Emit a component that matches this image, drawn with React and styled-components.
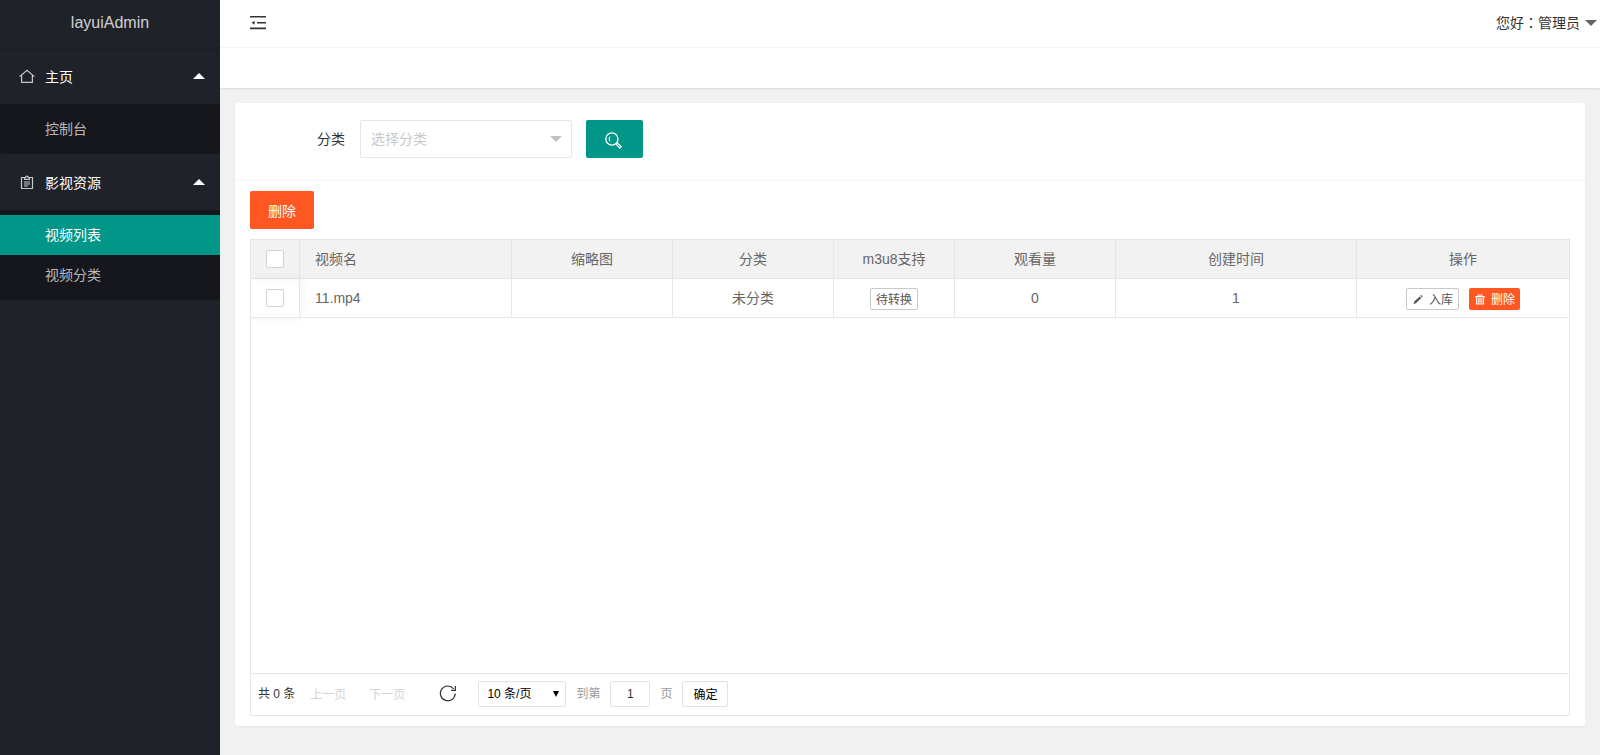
import * as React from 'react';
import styled, { createGlobalStyle, css } from 'styled-components';

const menus = [
  {
    title: '主页',
    icon: 'home',
    items: [{ title: '控制台' }]
  },
  {
    title: '影视资源',
    icon: 'list',
    items: [{ title: '视频列表', active: true }, { title: '视频分类' }]
  }
];

const columns = [
  { key: 'name', title: '视频名', align: 'left' },
  { key: 'thumb', title: '缩略图', width: 161 },
  { key: 'category', title: '分类', width: 161 },
  { key: 'm3u8', title: 'm3u8支持', width: 121 },
  { key: 'views', title: '观看量', width: 161 },
  { key: 'created', title: '创建时间', width: 241 }
];

const videos = [
  { id: 1, name: '11.mp4', thumb: '', category: '未分类', m3u8: '待转换', views: 0, created: 1 }
];

const GlobalStyle = createGlobalStyle`
  * {
    box-sizing: border-box;
  }

  body {
    margin: 0;
    background: #f1f1f1;
    color: #333;
    font: 14px/24px 'Liberation Sans', 'Noto Sans CJK SC', sans-serif;
  }

  button,
  input,
  select {
    margin: 0;
    font-family: inherit;
  }

  svg {
    display: block;
    flex: none;
  }
`;

const HomeIcon = () => (
  <svg width="16" height="16" viewBox="0 0 16 16" fill="none" stroke="currentColor" strokeWidth="1.2">
    <path d="M.6 8.6 8 2.4l7.4 6.2" />
    <path d="M2.6 7.2v7.2h10.8V7.2" />
  </svg>
);

const ListIcon = () => (
  <svg width="16" height="16" viewBox="0 0 16 16" fill="none" stroke="currentColor" strokeWidth="1.2">
    <path d="M5 3.5H2.5v11h11v-11H11" />
    <path d="M5.5 5.4V3.5h1.2a1.3 1.3 0 0 1 2.6 0h1.2v1.9z" />
    <path d="M5 8h6M5 10h6M5 12h4" />
  </svg>
);

const ShrinkIcon = () => (
  <svg width="16" height="16" viewBox="0 0 16 16" fill="currentColor">
    <path d="M0 1h16v1.6H0zM7 7h9v1.6H7zM0 12.6h16v1.6H0zM1.6 7.8 4.6 5.8v4z" />
  </svg>
);

const SearchIcon = () => (
  <svg width="17" height="17" viewBox="0 0 17 17" fill="none" stroke="currentColor">
    <circle cx="6.9" cy="7" r="6.1" strokeWidth="1.3" />
    <path d="M5 4.6a3.6 3.6 0 0 0 0 4.8" />
    <path d="m11.2 12.2 1.2-1.2 3.8 3.6-1.4 1.5z" strokeWidth="1.2" />
  </svg>
);

const RefreshIcon = () => (
  <svg width="18" height="18" viewBox="0 0 18 18" fill="none" stroke="currentColor" strokeWidth="1.2">
    <path d="M16.2 8.6A7.4 7.4 0 1 1 14.6 3.8" />
    <path d="M16.4 1v4.4h-4.2" />
  </svg>
);

const PencilIcon = () => (
  <svg width="12" height="12" viewBox="0 0 12 12" fill="currentColor">
    <path d="m1.6 11 .7-2.4 5.4-5.2 1.6 1.6-5.4 5.2zM8.3 2.8l.6-.6q.4-.3.7 0l.8.8q.3.4 0 .8l-.6.6z" />
  </svg>
);

const TrashIcon = () => (
  <svg width="12" height="12" viewBox="0 0 12 12" fill="none" stroke="currentColor">
    <path d="M1 3.5h10M4 3.3V2h4v1.3" />
    <path d="M2.4 4v7h7.2V4" fill="rgba(255, 255, 255, 0.35)" />
    <path d="M4.6 5.4v4M6 5.4v4M7.4 5.4v4" strokeWidth=".7" />
  </svg>
);

const icons = { home: HomeIcon, list: ListIcon };

const App = () => (
  <Layout>
    <GlobalStyle />
    <Sidebar>
      <Logo>layuiAdmin</Logo>
      <nav>
        {menus.map(menu => {
          const Icon = icons[menu.icon];
          return (
            <div key={menu.title}>
              <MenuTitle type="button" aria-expanded="true">
                <MenuIcon>
                  <Icon />
                </MenuIcon>
                {menu.title}
                <Caret $up $color="#fff" />
              </MenuTitle>
              <SubMenu>
                {menu.items.map(item => (
                  <MenuLink key={item.title} href="#" $active={item.active}>
                    {item.title}
                  </MenuLink>
                ))}
              </SubMenu>
            </div>
          );
        })}
      </nav>
    </Sidebar>

    <Page>
      <Header>
        <IconButton type="button" aria-label="侧边伸缩">
          <ShrinkIcon />
        </IconButton>
        <UserLink href="#">
          您好：管理员
          <Caret $color="#666" />
        </UserLink>
      </Header>
      <TabBar />

      <Content>
        <Card>
          <Filter>
            <FilterLabel htmlFor="category">分类</FilterLabel>
            <SelectBox>
              <CategorySelect id="category" defaultValue="">
                <option value="">选择分类</option>
              </CategorySelect>
              <Caret $color="#c2c2c2" />
            </SelectBox>
            <Button type="button" aria-label="搜索">
              <SearchIcon />
            </Button>
          </Filter>

          <CardBody>
            <Button type="button" $danger>
              删除
            </Button>
            <TableView>
              <TableScroll>
                <Table>
                  <colgroup>
                    <col width="49" />
                    {columns.map(col => (
                      <col key={col.key} width={col.width} />
                    ))}
                    <col />
                  </colgroup>
                  <thead>
                    <tr>
                      <Cell as="th" $fixed>
                        <Checkbox type="checkbox" aria-label="全选" />
                      </Cell>
                      {columns.map(col => (
                        <Cell as="th" key={col.key} $align={col.align}>
                          {col.title}
                        </Cell>
                      ))}
                      <Cell as="th">操作</Cell>
                    </tr>
                  </thead>
                  <tbody>
                    {videos.map(video => (
                      <tr key={video.id}>
                        <Cell $fixed>
                          <Checkbox type="checkbox" aria-label={video.name} />
                        </Cell>
                        {columns.map(col => (
                          <Cell key={col.key} $align={col.align}>
                            {col.key === 'm3u8' ? (
                              <Actions>
                                <SmallButton type="button">{video.m3u8}</SmallButton>
                              </Actions>
                            ) : (
                              video[col.key]
                            )}
                          </Cell>
                        ))}
                        <Cell>
                          <Actions>
                            <SmallButton type="button">
                              <PencilIcon />
                              入库
                            </SmallButton>
                            <SmallButton type="button" $danger>
                              <TrashIcon />
                              删除
                            </SmallButton>
                          </Actions>
                        </Cell>
                      </tr>
                    ))}
                  </tbody>
                </Table>
              </TableScroll>

              <Pager>
                <Total>共 0 条</Total>
                <PageButton type="button" disabled>
                  上一页
                </PageButton>
                <PageButton type="button" disabled>
                  下一页
                </PageButton>
                <RefreshButton type="button" aria-label="刷新">
                  <RefreshIcon />
                </RefreshButton>
                <LimitBox>
                  <LimitSelect aria-label="每页条数" defaultValue="10">
                    <option value="10">10 条/页</option>
                    <option value="20">20 条/页</option>
                  </LimitSelect>
                  <LimitArrow viewBox="0 0 6 6" aria-hidden="true">
                    <path d="M0 0h6L3 6z" />
                  </LimitArrow>
                </LimitBox>
                <label htmlFor="page">到第</label>
                <PageInput id="page" type="text" defaultValue="1" />
                <span>页</span>
                <ConfirmButton type="button">确定</ConfirmButton>
              </Pager>
            </TableView>
          </CardBody>
        </Card>
      </Content>
    </Page>
  </Layout>
);

const Layout = styled.div`
  display: flex;
  min-height: 100vh;
`;

const Sidebar = styled.aside`
  flex: 0 0 220px;
  background: #20222a;
`;

const Logo = styled.div`
  height: 48px;
  padding: 0 15px;
  box-shadow: 0 1px 2px rgba(0, 0, 0, 0.15);
  color: rgba(255, 255, 255, 0.8);
  font-size: 16px;
  line-height: 45px;
  text-align: center;
`;

const Caret = styled.i`
  width: 0;
  height: 0;
  border: 6px solid transparent;
  ${({ $up, $color }) =>
    $up
      ? css`
          border-top: 0;
          border-bottom-color: ${$color};
        `
      : css`
          border-bottom: 0;
          border-top-color: ${$color};
        `}
`;

const MenuTitle = styled.button`
  display: flex;
  align-items: center;
  width: 100%;
  height: 56px;
  padding: 0 15px 0 19px;
  border: 0;
  background: none;
  color: #fff;
  font-size: 14px;
  cursor: pointer;

  ${Caret} {
    margin-left: auto;
  }
`;

const MenuIcon = styled.span`
  margin-right: 10px;
  color: rgba(255, 255, 255, 0.75);
`;

const SubMenu = styled.div`
  padding: 5px 0;
  border-radius: 2px;
  background: rgba(0, 0, 0, 0.3);
`;

const MenuLink = styled.a`
  display: block;
  padding-left: 45px;
  background: ${({ $active }) => ($active ? '#009688' : 'transparent')};
  color: ${({ $active }) => ($active ? '#fff' : 'rgba(255, 255, 255, 0.7)')};
  line-height: 40px;
  text-decoration: none;
`;

const Page = styled.div`
  display: flex;
  flex: 1;
  flex-direction: column;
  min-width: 0;
`;

const Header = styled.header`
  display: flex;
  align-items: center;
  justify-content: space-between;
  height: 48px;
  padding: 0 3px 1px 30px;
  border-bottom: 1px solid #f6f6f6;
  background: #fff;
`;

const IconButton = styled.button`
  padding: 0;
  border: 0;
  background: none;
  color: #333;
  cursor: pointer;
`;

const UserLink = styled.a`
  display: flex;
  gap: 5px;
  align-items: center;
  color: #333;
  font-family: 'Liberation Sans', 'Noto Sans CJK TC', sans-serif;
  text-decoration: none;
`;

const TabBar = styled.div`
  height: 40px;
  background: #fff;
  box-shadow: 0 1px 2px rgba(0, 0, 0, 0.1);
`;

const Content = styled.main`
  display: flex;
  flex: 1;
  padding: 15px 15px 29px;
`;

const Card = styled.section`
  display: flex;
  flex: 1;
  flex-direction: column;
  min-width: 0;
  border-radius: 2px;
  background: #fff;
  box-shadow: 0 1px 2px rgba(0, 0, 0, 0.05);
`;

const Filter = styled.form`
  display: flex;
  align-items: center;
  padding: 17px 15px 22px;
  border-bottom: 1px solid #f6f6f6;
`;

const FilterLabel = styled.label`
  width: 110px;
  padding-right: 15px;
  text-align: right;
`;

const SelectBox = styled.div`
  position: relative;
  width: 212px;
  margin-right: 14px;

  ${Caret} {
    position: absolute;
    top: 16px;
    right: 10px;
    pointer-events: none;
  }
`;

const CategorySelect = styled.select`
  display: block;
  width: 100%;
  height: 38px;
  padding: 0 30px 0 10px;
  border: 1px solid #e6e6e6;
  border-radius: 2px;
  appearance: none;
  background: #fff;
  color: #c8c8c8;
  font-size: 14px;
`;

const Button = styled.button`
  height: 38px;
  padding: 0 18px;
  border: 0;
  border-radius: 2px;
  background: ${({ $danger }) => ($danger ? '#ff5722' : '#009688')};
  color: #fff;
  font-size: 14px;
  cursor: pointer;

  svg {
    margin: 2px 3px 0 1px;
  }
`;

const CardBody = styled.div`
  display: flex;
  flex: 1;
  flex-direction: column;
  gap: 10px;
  align-items: flex-start;
  padding: 10px 15px;
`;

const TableView = styled.div`
  display: flex;
  flex: 1;
  flex-direction: column;
  width: 100%;
  border: 1px solid #e6e6e6;
  color: #666;
`;

const TableScroll = styled.div`
  flex: 1;
  overflow-x: auto;
`;

const Table = styled.table`
  width: 100%;
  min-width: 1100px;
  border-spacing: 0;
  table-layout: fixed;
`;

const Cell = styled.td`
  height: 39px;
  padding: 0 ${({ $fixed }) => ($fixed ? 0 : 15)}px;
  border-right: 1px solid #e6e6e6;
  border-bottom: 1px solid #e6e6e6;
  font-weight: 400;
  text-align: ${({ $align }) => $align || 'center'};
  ${({ $fixed }) => $fixed && 'box-shadow: 1px 0 8px rgba(0, 0, 0, 0.06);'}

  th& {
    background: #f2f2f2;
  }

  &:last-child {
    border-right: 0;
  }
`;

const Checkbox = styled.input`
  display: block;
  width: 18px;
  height: 18px;
  margin: 0 auto;
  border: 1px solid #d2d2d2;
  border-radius: 2px;
  appearance: none;
  background: #fff;
  cursor: pointer;

  &:checked {
    border-color: #009688;
    background: #009688;
  }
`;

const Actions = styled.div`
  display: flex;
  gap: 10px;
  justify-content: center;
  padding-top: 1px;
`;

const SmallButton = styled.button`
  display: flex;
  gap: 5px;
  align-items: center;
  height: 22px;
  padding: 0 5px;
  border: ${({ $danger }) => ($danger ? 0 : '1px solid #c9c9c9')};
  border-radius: 2px;
  background: ${({ $danger }) => ($danger ? '#ff5722' : '#fff')};
  color: ${({ $danger }) => ($danger ? '#fff' : '#555')};
  font-size: 12px;
  cursor: pointer;
`;

const Pager = styled.div`
  display: flex;
  gap: 10px;
  align-items: center;
  height: 42px;
  padding: 0 7px 2px;
  border-top: 1px solid #e6e6e6;
  color: #999;
  font-size: 12px;
`;

const Total = styled.span`
  margin-right: 5px;
  color: #333;
`;

const PageButton = styled.button`
  margin-right: 13px;
  padding: 0;
  border: 0;
  background: none;
  color: #d2d2d2;
  font-size: 12px;
`;

const RefreshButton = styled(IconButton)`
  margin: 0 11px;
`;

const LimitBox = styled.div`
  position: relative;
`;

const LimitSelect = styled.select`
  display: block;
  width: 88px;
  height: 26px;
  padding: 0 20px 0 8px;
  border: 1px solid #e2e2e2;
  border-radius: 2px;
  appearance: none;
  background: #fff;
  color: #000;
  font-size: 12px;
`;

const LimitArrow = styled.svg`
  position: absolute;
  top: 10px;
  right: 7px;
  width: 6px;
  height: 6px;
  pointer-events: none;
`;

const PageInput = styled.input`
  width: 40px;
  height: 26px;
  padding: 0 3px;
  border: 1px solid #e2e2e2;
  border-radius: 2px;
  color: #333;
  font-size: 12px;
  text-align: center;
`;

const ConfirmButton = styled.button`
  height: 26px;
  padding: 0 10px;
  border: 1px solid #e2e2e2;
  border-radius: 2px;
  background: #fff;
  color: #000;
  font-size: 12px;
  cursor: pointer;
`;

export default App;
